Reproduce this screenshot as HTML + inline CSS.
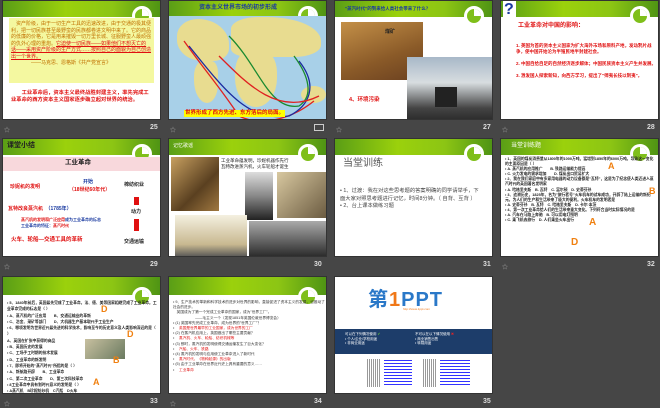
<!DOCTYPE html>
<html><head><meta charset="utf-8"><style>
*{margin:0;padding:0;box-sizing:border-box}
body{width:660px;height:407px;background:#464646;position:relative;overflow:hidden;font-family:"Liberation Sans","Noto Sans CJK SC",sans-serif}
.s{position:absolute;width:159px;background:#fff;overflow:hidden;border:1px solid #333}
.hd{position:absolute;left:0;top:0;width:100%;height:16px;background:linear-gradient(90deg,#5a9e16,#9bd10c 40%,#8cc514 70%,#4f9414)}
.pie{position:absolute;right:8px;top:5px;width:20px;height:20px;border-radius:50%;border:3px solid #fff;background:#7fbf1a}
.pie:after{content:"";position:absolute;left:7px;top:0;width:7px;height:7px;background:#fff;border-radius:0 7px 0 0}
.n{position:absolute;color:#ddd;font-size:7px;font-weight:bold}
.st{position:absolute;color:#aaa;font-size:6px}
.t{position:absolute;font-size:5px;line-height:6.5px;font-weight:bold}
.r{color:#e01010}.b{color:#1a3aa0}
</style></head><body>

<!-- 25 -->
<div class="s" style="left:2px;top:0;height:120px">
 <div class="hd"></div><div class="pie"></div>
 <div style="position:absolute;left:6px;top:17px;width:145px;height:65px;background:#f4f8a0"></div>
 <div class="t" style="left:8px;top:20px;width:140px;color:#c07000;font-weight:normal">　资产阶级，由于一切生产工具的迅速改进，由于交通的极其便利，把一切民族甚至最野蛮的民族都卷进文明中来了。它的商品的低廉的价格，它是用来摧毁一切万里长城、征服野蛮人最顽强的仇外心理的重炮。<span class="r" style="text-decoration:underline">它迫使一切民族——如果他们不想灭亡的话——采用资产阶级的生产方式……按照自己的面貌为自己创造出一个世界。</span><br>　　　　——马克思、恩格斯《共产党宣言》</div>
 <div class="t r" style="left:8px;top:89px;width:142px;font-size:5.3px;line-height:7px">　　工业革命后，资本主义最终战胜封建主义，率先完成工业革命的西方资本主义国家逐步确立起对世界的统治。</div>
</div>
<div class="st" style="left:4px;top:125px">☆</div><div class="n" style="left:150px;top:124px">25</div>

<!-- 26 -->
<div class="s" style="left:168px;top:0;height:120px">
 <div class="hd" style="height:15px"></div><div class="pie"></div>
 <div style="position:absolute;left:0;top:15px;width:160px;height:105px;background:#a8d0e8"></div>
 <div style="position:absolute;left:8px;top:18px;width:52px;height:42px;background:#e8dc90;border-radius:40% 60% 30% 50%"></div>
 <div style="position:absolute;left:25px;top:60px;width:24px;height:42px;background:#e8dc90;border-radius:40% 30% 50% 60%"></div>
 <div style="position:absolute;left:62px;top:16px;width:90px;height:40px;background:#e8dc90;border-radius:30% 60% 30% 20%"></div>
 <div style="position:absolute;left:66px;top:48px;width:42px;height:58px;background:#e8dc90;border-radius:40% 40% 50% 50%"></div>
 <div style="position:absolute;left:132px;top:85px;width:25px;height:17px;background:#e8dc90;border-radius:50%"></div>
 <svg style="position:absolute;left:0;top:15px" width="160" height="105"><g fill="none" stroke-width="1.3"><path d="M15 25 C40 60 50 70 70 100 C90 110 120 105 145 85" stroke="#e02020"/><path d="M20 30 C60 80 80 105 120 100 C140 90 150 70 130 45" stroke="#1a2aa0"/><path d="M60 20 C90 50 100 95 130 90 C145 80 140 60 125 40" stroke="#1a8a30"/><path d="M50 40 C80 70 110 100 150 80" stroke="#e02020"/></g></svg>
 <div class="t b" style="left:30px;top:4px;font-size:6px">资本主义世界市场的初步形成</div>
 <div class="t r" style="left:15px;top:109px;font-size:5.5px;background:#ff0;padding:0 1px">世界形成了西方先进、东方落后的局面。</div>
</div>
<div class="st" style="left:170px;top:125px">☆</div>
<div style="position:absolute;left:314px;top:124px;width:10px;height:7px;border:1px solid #ccc"></div>

<!-- 27 -->
<div class="s" style="left:334px;top:0;height:120px">
 <div class="hd"></div><div class="pie"></div>
 <div class="t" style="left:10px;top:5px;color:#1a3aa0;font-size:4.5px">"蒸汽时代"的到来给人类社会带来了什么？</div>
 <div style="position:absolute;left:6px;top:21px;width:82px;height:58px;background:linear-gradient(160deg,#c49048,#8a5a28 60%,#6a4020)"></div>
 <div class="t" style="left:50px;top:28px;color:#222">煤矿</div>
 <div style="position:absolute;left:72px;top:56px;width:87px;height:64px;background:linear-gradient(180deg,#a8b8c8,#d8dde0 40%,#444 80%,#2a2a2a)"></div>
 <div style="position:absolute;left:100px;top:86px;width:22px;height:20px;background:#222"></div>
 <div class="t r" style="left:14px;top:96px;font-size:5.5px">4、环境污染</div>
</div>
<div class="st" style="left:336px;top:125px">☆</div><div class="n" style="left:483px;top:124px">27</div>

<!-- 28 -->
<div class="s" style="left:500px;top:0;height:120px">
 <div class="hd"></div><div class="pie"></div>
 <div style="position:absolute;left:2px;top:0;width:13px;height:22px;background:#fff"></div>
 <div style="position:absolute;left:3px;top:0;color:#1a3aa0;font-weight:bold;font-size:16px">?</div>
 <div class="t r" style="left:17px;top:22px;font-size:6px">工业革命对中国的影响：</div>
 <div class="t r" style="left:15px;top:42px;width:140px;font-size:4.5px;line-height:6px">1. 英国为首的资本主义国家为扩大海外市场和原料产地，发动鸦片战争，使中国开始沦为半殖民地半封建社会。<br><br>2. 中国自给自足的自然经济逐步解体；中国民族资本主义产生并发展。<br><br>3. 激发国人探索新知，向西方学习，提出了"师夷长技以制夷"。</div>
</div>
<div class="st" style="left:502px;top:125px">☆</div><div class="n" style="left:647px;top:124px">28</div>

<!-- 29 -->
<div class="s" style="left:2px;top:138px;height:119px">
 <div class="hd" style="height:16px"></div><div class="pie"></div>
 <div class="t" style="left:4px;top:4px;font-size:7px;color:#222">课堂小结</div>
 <div style="position:absolute;left:0;top:18px;width:160px;height:14px;background:#f8d8dc"></div>
 <div class="t" style="left:62px;top:21px;font-size:6.5px;color:#222">工业革命</div>
 <div class="t b" style="left:80px;top:40px">开始</div>
 <div class="t r" style="left:66px;top:48px">（18世纪60年代）</div>
 <div class="t r" style="left:7px;top:45px">珍妮机的发明</div>
 <div class="t" style="left:121px;top:43px;color:#222">棉纺织业</div>
 <div style="position:absolute;left:131px;top:58px;width:5px;height:8px;background:#e01010"></div>
 <div class="t" style="left:128px;top:70px;color:#222">动力</div>
 <div class="t r" style="left:5px;top:67px">瓦特改良蒸汽机　<span class="b">（1785年）</span></div>
 <div class="t r" style="left:18px;top:78px;font-size:4px;line-height:5.5px">蒸汽机的发明和广泛应用<span class="b">成为工业革命的标志</span><br><span class="b">工业革命的特征：</span>蒸汽时代</div>
 <div style="position:absolute;left:131px;top:80px;width:5px;height:12px;background:#e01010"></div>
 <div class="t r" style="left:8px;top:98px;font-size:5.5px">火车、轮船—交通工具的革新</div>
 <div class="t" style="left:121px;top:100px;color:#222">交通运输</div>
</div>
<div class="st" style="left:4px;top:262px">☆</div><div class="n" style="left:150px;top:261px">29</div>

<!-- 30 -->
<div class="s" style="left:168px;top:138px;height:119px">
 <div class="hd"></div><div class="pie"></div>
 <div class="t" style="left:4px;top:4px;color:#fff;font-weight:normal">记忆歌谣</div>
 <div style="position:absolute;left:2px;top:18px;width:48px;height:54px;background:linear-gradient(135deg,#c8a060,#5a4020 60%,#a07840)"></div>
 <div class="t" style="left:52px;top:19px;color:#222;font-weight:normal;font-size:4.5px;line-height:5.5px">工业革命蕴发明，珍妮机器作先行<br>瓦特改进蒸汽机，火车轮船才诞生</div>
 <div style="position:absolute;left:76px;top:33px;width:28px;height:48px;background:linear-gradient(180deg,#ddd,#888 50%,#222)"></div>
 <div style="position:absolute;left:108px;top:33px;width:50px;height:46px;background:linear-gradient(135deg,#d8c8a0,#6a5a40)"></div>
 <div style="position:absolute;left:6px;top:76px;width:72px;height:42px;background:linear-gradient(180deg,#f4f0e0,#c8b890 70%,#555)"></div>
 <div style="position:absolute;left:80px;top:82px;width:78px;height:38px;background:linear-gradient(180deg,#aaa,#666 50%,#222)"></div>
</div>
<div class="n" style="left:314px;top:261px">30</div>

<!-- 31 -->
<div class="s" style="left:334px;top:138px;height:119px">
 <div class="hd"></div><div class="pie"></div>
 <div class="t" style="left:8px;top:22px;font-size:10px;color:#555;font-weight:normal">当堂训练</div>
 <div class="t" style="left:5px;top:49px;width:142px;color:#444;font-weight:normal;font-size:5.3px;line-height:7.5px">• 1、过渡：我在对这些思考题的答案明确的同学请举手，下面大家对照思考题进行记忆，时间8分钟。（ 自背、互背 ）<br>• 2、台上课本做练习题</div>
</div>
<div class="n" style="left:483px;top:261px">31</div>

<!-- 32 -->
<div class="s" style="left:500px;top:138px;height:119px">
 <div class="hd"></div><div class="pie"></div>
 <div class="t" style="left:10px;top:4px;color:#fff;font-weight:normal;font-size:6px">当堂训练题</div>
 <div class="t" style="left:4px;top:18px;width:152px;color:#222;font-size:3.8px;line-height:5.1px">• 1、英国的煤炭消费量从1800年的1000万吨，猛增到1850年的6000万吨。导致这一变化的主要原因是（ ）<br>• A. 蒸汽机的应用推广　　B. 铁路运输能力提高<br>• C. 火力发电的需求增加　　D. 煤炭出口贸易扩大<br>• 2、我在我们家庭中有多家用电器的动力设备都是"瓦特"，这是为了纪念使人类迈进入蒸汽时代的英国著名发明家<br>• A. 哈格里夫斯　B. 瓦特　C. 富尔顿　D. 史蒂芬孙<br>• 3、追溯历史，1825年，名为"旅行者号"火车机车的试车成功，开辟了陆上运输的新纪元。为人们的生产和生活带来了极大的便利。火车机车的发明者是<br>• A. 史蒂芬孙　B. 瓦特　C. 哈格里夫斯　D. 卡尔·本茨<br>• 4、第一次工业革命给人们的生活带来重大变化。下列符合当时实际情况的是<br>• A. 汽车在马路上奔驰　B. 可以用电灯照明<br>• C. 乘飞机去旅行　D. 人们乘坐火车出行</div>
 <div style="position:absolute;left:107px;top:22px;color:#f08010;font-weight:bold;font-size:9px">A</div>
 <div style="position:absolute;left:148px;top:47px;color:#f08010;font-weight:bold;font-size:9px">B</div>
 <div style="position:absolute;left:88px;top:78px;color:#f08010;font-weight:bold;font-size:10px">A</div>
 <div style="position:absolute;left:70px;top:98px;color:#f08010;font-weight:bold;font-size:10px">D</div>
</div>
<div class="st" style="left:502px;top:262px">☆</div><div class="n" style="left:647px;top:261px">32</div>

<!-- 33 -->
<div class="s" style="left:2px;top:276px;height:118px">
 <div class="hd" style="top:0;height:18px"></div><div class="pie" style="top:10px"></div>
 <div class="t" style="left:4px;top:23px;width:152px;color:#222;font-size:3.8px;line-height:6.3px">• 5、1840年前后，英国最先完成了工业革命。法、德、美等国家相继完成了工业革命。工业革命完成的标志是（ ）<br>• A、蒸汽机的广泛应用　　B、交通运输业的革新<br>• C、冶金、采矿等部门　　D、大机器生产基本取代手工业生产<br>• 6、哪项发明为世界近代最先进的科学技术，影响至今的历史意义及人类影响深远的是（ ）<br>A、英国在扩张中获得的商品<br>• B、英国历史的发展<br>• C、工场手工时期的技术发展<br>• D、工业革命的新发明<br>• 7、即将开始的"蒸汽时代"所指的是（ ）<br>• A、新航路开辟　　B、工业革命<br>• C、第二次工业革命　　D、第三次科技革命<br>• 8工业革命中具有划时代意义的发明是（ ）<br>• A蒸汽机　B珍妮纺纱机　C汽船　D火车</div>
 <div style="position:absolute;left:82px;top:62px;width:40px;height:20px;background:linear-gradient(135deg,#c8c0a0,#6a7a60)"></div>
 <div style="position:absolute;left:98px;top:27px;color:#f08010;font-weight:bold;font-size:9px">D</div>
 <div style="position:absolute;left:124px;top:52px;color:#f08010;font-weight:bold;font-size:9px">D</div>
 <div style="position:absolute;left:110px;top:78px;color:#f08010;font-weight:bold;font-size:9px">B</div>
 <div style="position:absolute;left:90px;top:100px;color:#f08010;font-weight:bold;font-size:9px">A</div>
</div>
<div class="st" style="left:4px;top:399px">☆</div><div class="n" style="left:150px;top:398px">33</div>

<!-- 34 -->
<div class="s" style="left:168px;top:276px;height:118px">
 <div class="hd" style="height:18px"></div><div class="pie" style="top:10px"></div>
 <div class="t" style="left:4px;top:23px;width:152px;color:#333;font-weight:normal;font-size:3.7px;line-height:5.2px">• 9、生产技术的革新和科学技术的进步对世界的影响，直接促进了资本主义的发展，也推动了社会的进步。<br>　英国成为了第一个完成工业革命的国家，成为"世界工厂"。<br>　　　　　　——毛主义一个（发现1851年英国伦敦世界博览会）<br>• (1) 英国率先完成工业革命，成为世界的"世界工厂"？<br>• 　<span class="r">英国是世界最早的工业国家，成为世界的工厂</span><br>• (2) 在蒸汽机应用上，英国做出了哪些主要贡献？<br>• 　<span class="r">蒸汽机、火车、轮船、纺织机械等</span><br>• (3) 那时，蒸汽机的发明使得交通运输发生了巨大变化？<br>• 　<span class="r">汽船、火车、铁路</span><br>• (4) 蒸汽机的发明与应用使工业革命进入了新时代<br>• 　<span class="r">蒸汽时代，《物种起源》的出版</span><br>• (5) 由于工业革命在世界近代史上具有重要的意义……<br>• 　<span class="r">工业革命</span></div>
</div>
<div class="st" style="left:170px;top:399px">☆</div><div class="n" style="left:314px;top:398px">34</div>

<!-- 35 -->
<div class="s" style="left:334px;top:276px;height:118px">
 <div style="position:absolute;left:33px;top:6px;font-size:20px;font-weight:bold;color:#2a78c8;letter-spacing:1px">第<span style="color:#f07818">1</span>PPT</div>
 <div style="position:absolute;left:68px;top:30px;font-size:3px;color:#f07818">http://www.1ppt.com</div>
 <div style="position:absolute;left:0;top:52px;width:159px;height:25px;background:#1d3d6a"></div>
 <div class="t" style="left:10px;top:55px;color:#fff;font-size:3.5px;line-height:4.5px;font-weight:normal">可以在下列情况使用 <span style="color:#6c3">✔</span><br>• 个人/企业/学校用途<br>• 非商业用途</div>
 <div class="t" style="left:80px;top:55px;color:#fff;font-size:3.5px;line-height:4.5px;font-weight:normal">不可以在以下情况使用 <span style="color:#e22">✖</span><br>• 商业销售出售<br>• 转载用途</div>
 <div style="position:absolute;left:32px;top:82px;width:14px;height:28px;background:repeating-linear-gradient(90deg,#999 0 1px,#fff 1px 2px)"></div>
 <div style="position:absolute;left:49px;top:83px;width:28px;height:26px;background:repeating-linear-gradient(180deg,#33f 0 1px,#fff 1px 3px)"></div>
 <div style="position:absolute;left:88px;top:82px;width:14px;height:28px;background:repeating-linear-gradient(90deg,#999 0 1px,#fff 1px 2px)"></div>
 <div style="position:absolute;left:105px;top:83px;width:30px;height:26px;background:repeating-linear-gradient(180deg,#33f 0 1px,#fff 1px 3px)"></div>
</div>
<div class="n" style="left:483px;top:398px">35</div>

</body></html>
